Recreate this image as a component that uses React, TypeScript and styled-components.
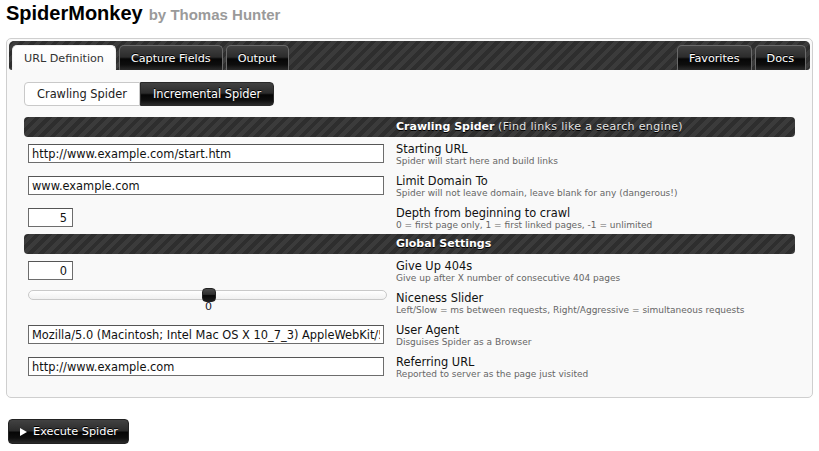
import React from 'react';
import styled, { createGlobalStyle, css } from 'styled-components';

const Global = createGlobalStyle`
  html, body { margin: 0; padding: 0; background: #fff; }
  body { font-family: "DejaVu Sans", Verdana, sans-serif; color: #222; }
  * { box-sizing: border-box; }
`;

const stripes = css`
  background-color: #333;
  background-image: repeating-linear-gradient(
    135deg,
    #2e2e2e 0px,
    #2e2e2e 4px,
    #3b3b3b 4px,
    #3b3b3b 8px
  );
`;

const gloss = css`
  background: linear-gradient(
    to bottom,
    #424242 0%,
    #2c2c2c 46%,
    #060606 54%,
    #0e0e0e 78%,
    #2a2a2a 100%
  );
  color: #fff;
  text-shadow: 0 -1px 0 #000;
`;

const Page = styled.div`
  padding: 1px 0 0 6px;
`;

const Title = styled.h1`
  margin: 0 0 13px 0;
  height: 24px;
  font-family: "Liberation Sans", Arial, sans-serif;
  font-size: 20px;
  line-height: 24px;
  font-weight: bold;
  color: #000;
`;

const Byline = styled.span`
  margin-left: 6px;
  font-size: 15px;
  line-height: 15px;
  color: #9a9a9a;
`;

const Panel = styled.div`
  width: 807px;
  border: 1px solid #cfcfcf;
  border-radius: 5px;
  padding: 2px;
  background: #f9f9f9;
`;

const TabBar = styled.div`
  ${stripes};
  display: flex;
  align-items: flex-end;
  gap: 3px;
  height: 29px;
  padding: 0 4px 0 3px;
  border-radius: 5px 5px 3px 3px;
`;

const Spacer = styled.div`
  flex: 1;
`;

const Tab = styled.button<{ $active?: boolean }>`
  height: 25px;
  padding: 0 11px;
  font-family: "DejaVu Sans", Verdana, sans-serif;
  font-size: 11.2px;
  line-height: 23px;
  border: 1px solid #6a6a6a;
  border-bottom: none;
  border-radius: 5px 5px 0 0;
  cursor: pointer;
  ${(p) =>
    p.$active
      ? css`
          background: linear-gradient(#ffffff, #f9f9f9);
          border-color: #f2f2f2;
          color: #333;
        `
      : gloss};
`;

const Content = styled.div`
  padding: 12px 15px 13px 15px;
`;

const ToggleGroup = styled.div`
  display: flex;
  margin-bottom: 11px;
`;

const Toggle = styled.button<{ $active?: boolean; $first?: boolean }>`
  height: 24px;
  padding: 0 12px;
  font-family: "DejaVu Sans", Verdana, sans-serif;
  font-size: 11.4px;
  line-height: 22px;
  border-radius: ${(p) => (p.$first ? '4px 0 0 4px' : '0 4px 4px 0')};
  cursor: pointer;
  ${(p) =>
    p.$active
      ? css`
          background: #fff;
          border: 1px solid #c9c9c9;
          color: #222;
        `
      : css`
          ${gloss};
          border: 1px solid #2a2a2a;
        `};
`;

const SectionHeader = styled.div<{ $gap?: number }>`
  ${stripes};
  display: grid;
  grid-template-columns: 372px 1fr;
  height: 20px;
  margin-top: ${(p) => p.$gap ?? 0}px;
  border-radius: 4px;
  font-size: 11px;
  line-height: 20px;
  color: #fff;
  text-shadow: 0 1px 0 #000;
`;

const HeaderText = styled.div`
  grid-column: 2;
  white-space: nowrap;
`;

const HeaderStrong = styled.strong`
  font-weight: bold;
`;

const HeaderNote = styled.span`
  color: #e4e4e4;
  letter-spacing: 0.35px;
`;

const Row = styled.div`
  display: grid;
  grid-template-columns: 372px 1fr;
  height: 32px;
`;

const FieldCell = styled.div<{ $top?: number }>`
  padding: ${(p) => p.$top ?? 7}px 0 0 4px;
`;

const TextInput = styled.input<{ $width?: number; $right?: boolean }>`
  display: block;
  width: ${(p) => p.$width ?? 356}px;
  height: 19px;
  padding: 0 ${(p) => (p.$right ? 5 : 3)}px 0 3px;
  border: 1px solid #6d6d6d;
  border-top-color: #555;
  background: #fff;
  font-family: "DejaVu Sans", Verdana, sans-serif;
  font-size: 11.4px;
  color: #111;
  text-align: ${(p) => (p.$right ? 'right' : 'left')};
  outline: none;
`;

const LabelCell = styled.div`
  padding-top: 6px;
  white-space: nowrap;
`;

const Label = styled.div`
  font-size: 11.4px;
  line-height: 13px;
  color: #111;
`;

const Desc = styled.div`
  font-size: 9px;
  line-height: 11px;
  color: #666;
`;

const SliderTrack = styled.div`
  position: relative;
  width: 359px;
  height: 10px;
  margin-top: 4px;
  border: 1px solid #c9c9c9;
  border-radius: 5px;
  background: linear-gradient(#ffffff, #f1f1f1);
`;

const SliderHandle = styled.div`
  position: absolute;
  top: -3px;
  width: 14px;
  height: 14px;
  margin-left: -6px;
  border-radius: 4px;
  background: linear-gradient(#4a4a4a 0%, #2e2e2e 45%, #080808 55%, #1c1c1c 100%);
  border: 1px solid #222;
`;

const SliderValue = styled.div`
  position: absolute;
  top: 9px;
  width: 20px;
  margin-left: -9px;
  text-align: center;
  font-size: 11px;
  line-height: 13px;
  color: #1a1a2e;
`;

const ExecuteButton = styled.button`
  display: flex;
  align-items: center;
  height: 25px;
  margin: 21px 0 0 2px;
  padding: 0 10px 0 11px;
  border: 1px solid #222;
  border-radius: 4px;
  font-family: "DejaVu Sans", Verdana, sans-serif;
  font-size: 11.3px;
  cursor: pointer;
  ${gloss};
`;

const PlayIcon = styled.svg`
  width: 7px;
  height: 8px;
  margin-right: 6px;
  flex: none;
`;

type Field = {
  label: string;
  desc: string;
  value?: string;
  small?: boolean;
  slider?: { min: number; max: number; value: number };
};

const crawling: Field[] = [
  { label: 'Starting URL', desc: 'Spider will start here and build links', value: 'http://www.example.com/start.htm' },
  { label: 'Limit Domain To', desc: 'Spider will not leave domain, leave blank for any (dangerous!)', value: 'www.example.com' },
  { label: 'Depth from beginning to crawl', desc: '0 = first page only, 1 = first linked pages, -1 = unlimited', value: '5', small: true },
];

const global: Field[] = [
  { label: 'Give Up 404s', desc: 'Give up after X number of consecutive 404 pages', value: '0', small: true },
  { label: 'Niceness Slider', desc: 'Left/Slow = ms between requests, Right/Aggressive = simultaneous requests', slider: { min: -10, max: 10, value: 0 } },
  {
    label: 'User Agent',
    desc: 'Disguises Spider as a Browser',
    value: 'Mozilla/5.0 (Macintosh; Intel Mac OS X 10_7_3) AppleWebKit/535.19 (KHTML, like Gecko) Chrome/18.0.1025.162 Safari/535.19',
  },
  { label: 'Referring URL', desc: 'Reported to server as the page just visited', value: 'http://www.example.com' },
];

function FieldRow({ f }: { f: Field }) {
  let control: React.ReactNode;
  if (f.slider) {
    const pct = ((f.slider.value - f.slider.min) / (f.slider.max - f.slider.min)) * 100;
    control = (
      <FieldCell $top={0}>
        <SliderTrack>
          <SliderHandle style={{ left: `${pct}%` }} />
          <SliderValue style={{ left: `${pct}%` }}>{f.slider.value}</SliderValue>
        </SliderTrack>
      </FieldCell>
    );
  } else {
    control = (
      <FieldCell>
        <TextInput
          defaultValue={f.value}
          $width={f.small ? 45 : 356}
          $right={f.small}
          readOnly
        />
      </FieldCell>
    );
  }
  return (
    <Row>
      {control}
      <LabelCell>
        <Label>{f.label}</Label>
        <Desc>{f.desc}</Desc>
      </LabelCell>
    </Row>
  );
}

export default function App() {
  return (
    <>
      <Global />
      <Page>
        <Title>
          SpiderMonkey<Byline>by Thomas Hunter</Byline>
        </Title>
        <Panel>
          <TabBar>
            <Tab $active>URL Definition</Tab>
            <Tab>Capture Fields</Tab>
            <Tab>Output</Tab>
            <Spacer />
            <Tab>Favorites</Tab>
            <Tab>Docs</Tab>
          </TabBar>
          <Content>
            <ToggleGroup>
              <Toggle $active $first>Crawling Spider</Toggle>
              <Toggle>Incremental Spider</Toggle>
            </ToggleGroup>
            <SectionHeader>
              <HeaderText>
                <HeaderStrong>Crawling Spider</HeaderStrong>{' '}
                <HeaderNote>(Find links like a search engine)</HeaderNote>
              </HeaderText>
            </SectionHeader>
            {crawling.map((f) => (
              <FieldRow key={f.label} f={f} />
            ))}
            <SectionHeader $gap={1}>
              <HeaderText>
                <HeaderStrong>Global Settings</HeaderStrong>
              </HeaderText>
            </SectionHeader>
            {global.map((f) => (
              <FieldRow key={f.label} f={f} />
            ))}
          </Content>
        </Panel>
        <ExecuteButton>
          <PlayIcon viewBox="0 0 7 8">
            <polygon points="0,0 7,4 0,8" fill="#fff" />
          </PlayIcon>
          Execute Spider
        </ExecuteButton>
      </Page>
    </>
  );
}
